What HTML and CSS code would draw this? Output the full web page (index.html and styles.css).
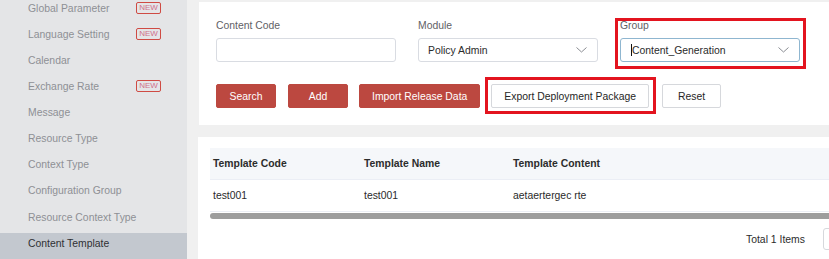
FILE: index.html
```html
<!DOCTYPE html>
<html>
<head>
<meta charset="utf-8">
<link rel="stylesheet" href="styles.css">
</head>
<body>
<div class="app">
  <aside class="sidebar">
    <ul class="menu">
      <li class="menu-item"><span>Global Parameter</span><span class="badge">NEW</span></li>
      <li class="menu-item"><span>Language Setting</span><span class="badge">NEW</span></li>
      <li class="menu-item"><span>Calendar</span></li>
      <li class="menu-item"><span>Exchange Rate</span><span class="badge">NEW</span></li>
      <li class="menu-item"><span>Message</span></li>
      <li class="menu-item"><span>Resource Type</span></li>
      <li class="menu-item"><span>Context Type</span></li>
      <li class="menu-item"><span>Configuration Group</span></li>
      <li class="menu-item"><span>Resource Context Type</span></li>
      <li class="menu-item active"><span>Content Template</span></li>
    </ul>
  </aside>
  <main class="main">
    <section class="card search-card">
      <div class="form-row">
        <div class="field">
          <label class="label">Content Code</label>
          <div class="input"></div>
        </div>
        <div class="field">
          <label class="label">Module</label>
          <div class="input select"><span>Policy Admin</span>
            <svg class="chev" width="11" height="6" viewBox="0 0 11 6"><polyline points="0.5,0.5 5.5,5 10.5,0.5" fill="none" stroke="#8a8d93" stroke-width="1"/></svg>
          </div>
        </div>
        <div class="field">
          <label class="label">Group</label>
          <div class="input select focused"><span><span class="caret"></span>Content_Generation</span>
            <svg class="chev" width="11" height="6" viewBox="0 0 11 6"><polyline points="0.5,0.5 5.5,5 10.5,0.5" fill="none" stroke="#8a8d93" stroke-width="1"/></svg>
          </div>
        </div>
      </div>
      <div class="btn-row">
        <button class="btn primary">Search</button>
        <button class="btn primary add">Add</button>
        <button class="btn primary">Import Release Data</button>
        <button class="btn plain">Export Deployment Package</button>
        <button class="btn plain reset">Reset</button>
      </div>
    </section>
    <section class="card table-card">
      <div class="table">
        <div class="tr head">
          <div class="td c1">Template Code</div>
          <div class="td c2">Template Name</div>
          <div class="td c3">Template Content</div>
        </div>
        <div class="tr body">
          <div class="td c1">test001</div>
          <div class="td c2">test001</div>
          <div class="td c3">aetaertergec rte</div>
        </div>
        <div class="scrollbar"></div>
      </div>
      <div class="pager">
        <span class="total">Total 1 Items</span>
        <span class="size-box"></span>
      </div>
    </section>
  </main>
</div>
<div class="mark mark-group"></div>
<div class="mark mark-export"></div>
</body>
</html>
```

FILE: styles.css
```css
html, body {
  margin: 0;
  padding: 0;
  height: 259px;
  overflow: hidden;
  font-family: "Liberation Sans", Arial, sans-serif;
  font-size: 10.4px;
}
.app {
  display: flex;
  height: 259px;
  background: #f0f0f0;
}
.sidebar {
  width: 187px;
  flex: 0 0 187px;
  background: #e4e5e7;
  overflow: hidden;
}
.menu {
  list-style: none;
  margin: -2px 0 0 0;
  padding: 0;
}
.menu-item {
  display: flex;
  align-items: center;
  justify-content: space-between;
  height: 20px;
  padding: 0 26px 6.15px 28px;
  color: #8e9095;
  font-size: 10.4px;
}
.menu-item.active {
  background: #c3c8cf;
  color: #2f3033;
  height: 20px;
  padding-bottom: 10px;
}
.badge {
  box-sizing: border-box;
  width: 25px;
  height: 12px;
  border: 1px solid #cf4b44;
  border-radius: 2px;
  color: #d0708a;
  font-size: 8px;
  line-height: 10px;
  text-align: center;
}
.main {
  flex: 1;
  min-width: 0;
  padding: 2px 0 0 11px;
  display: flex;
  flex-direction: column;
  gap: 12px;
}
.card {
  background: #fff;
}
.search-card {
  margin-left: 1px;
  height: 123px;
  box-sizing: border-box;
  padding: 17px 0 0 17px;
}
.form-row {
  display: flex;
  gap: 22px;
}
.field {
  width: 180px;
  display: flex;
  flex-direction: column;
  gap: 5px;
}
.label {
  color: #5f6166;
  line-height: 14px;
  height: 14px;
}
.input {
  box-sizing: border-box;
  height: 24px;
  border: 1px solid #d9dce2;
  border-radius: 3px;
  background: #fff;
}
.select {
  display: flex;
  align-items: center;
  justify-content: space-between;
  padding: 0 10px 0 9px;
  color: #2b2b2b;
}
.select.focused {
  border-color: #8fb6d0;
}
.caret {
  display: inline-block;
  width: 0;
  height: 12px;
  border-left: 1px solid #111;
  vertical-align: -2px;
  margin-left: 1px;
}
.chev {
  display: block;
}
.btn-row {
  display: flex;
  gap: 11px;
  margin-top: 22px;
}
.btn {
  box-sizing: border-box;
  height: 24px;
  min-width: 60px;
  padding: 0 12px;
  border-radius: 2px;
  font-family: "Liberation Sans", Arial, sans-serif;
  font-size: 10.4px;
  cursor: pointer;
}
.btn.primary {
  background: #bc4840;
  border: 1px solid #bc4840;
  color: #fff;
}
.btn.add {
  margin-left: 1px;
}
.btn.plain {
  background: #fff;
  border: 1px solid #d6d8dc;
  color: #262626;
}
.btn.reset {
  margin-left: 2px;
  min-width: 59px;
}
.table-card {
  flex: 1;
  padding: 11px 0 0 12px;
}
.table {
  width: 700px;
  min-width: calc(100% + 20px);
}
.tr {
  display: flex;
  align-items: center;
}
.tr.head {
  height: 31px;
  background: #f5f7fa;
  border-bottom: 1px solid #ebeef5;
  font-weight: bold;
  color: #2c2c2c;
}
.tr.body {
  height: 32px;
  color: #2a2a2a;
  border-bottom: 1px solid #ebeef5;
  box-sizing: border-box;
}
.td {
  padding-left: 3px;
  box-sizing: border-box;
}
.c1 { width: 151px; }
.c2 { width: 149px; }
.c3 { flex: 1; }
.scrollbar {
  height: 6px;
  background: #9d9d9d;
  border-radius: 3px;
  margin-top: 1px;
}
.pager {
  display: flex;
  align-items: center;
  padding: 9px 0 0 536px;
  gap: 18px;
  white-space: nowrap;
}
.total {
  color: #2c2c2c;
}
.size-box {
  display: inline-block;
  width: 60px;
  height: 22px;
  box-sizing: border-box;
  border: 1px solid #d6d8dc;
  border-radius: 3px;
  flex: 0 0 60px;
}
.mark {
  position: absolute;
  box-sizing: border-box;
  border: 3px solid #e3141f;
}
.mark-group {
  left: 615px;
  top: 18px;
  width: 191px;
  height: 51px;
}
.mark-export {
  left: 485px;
  top: 77px;
  width: 171px;
  height: 37px;
}
```
